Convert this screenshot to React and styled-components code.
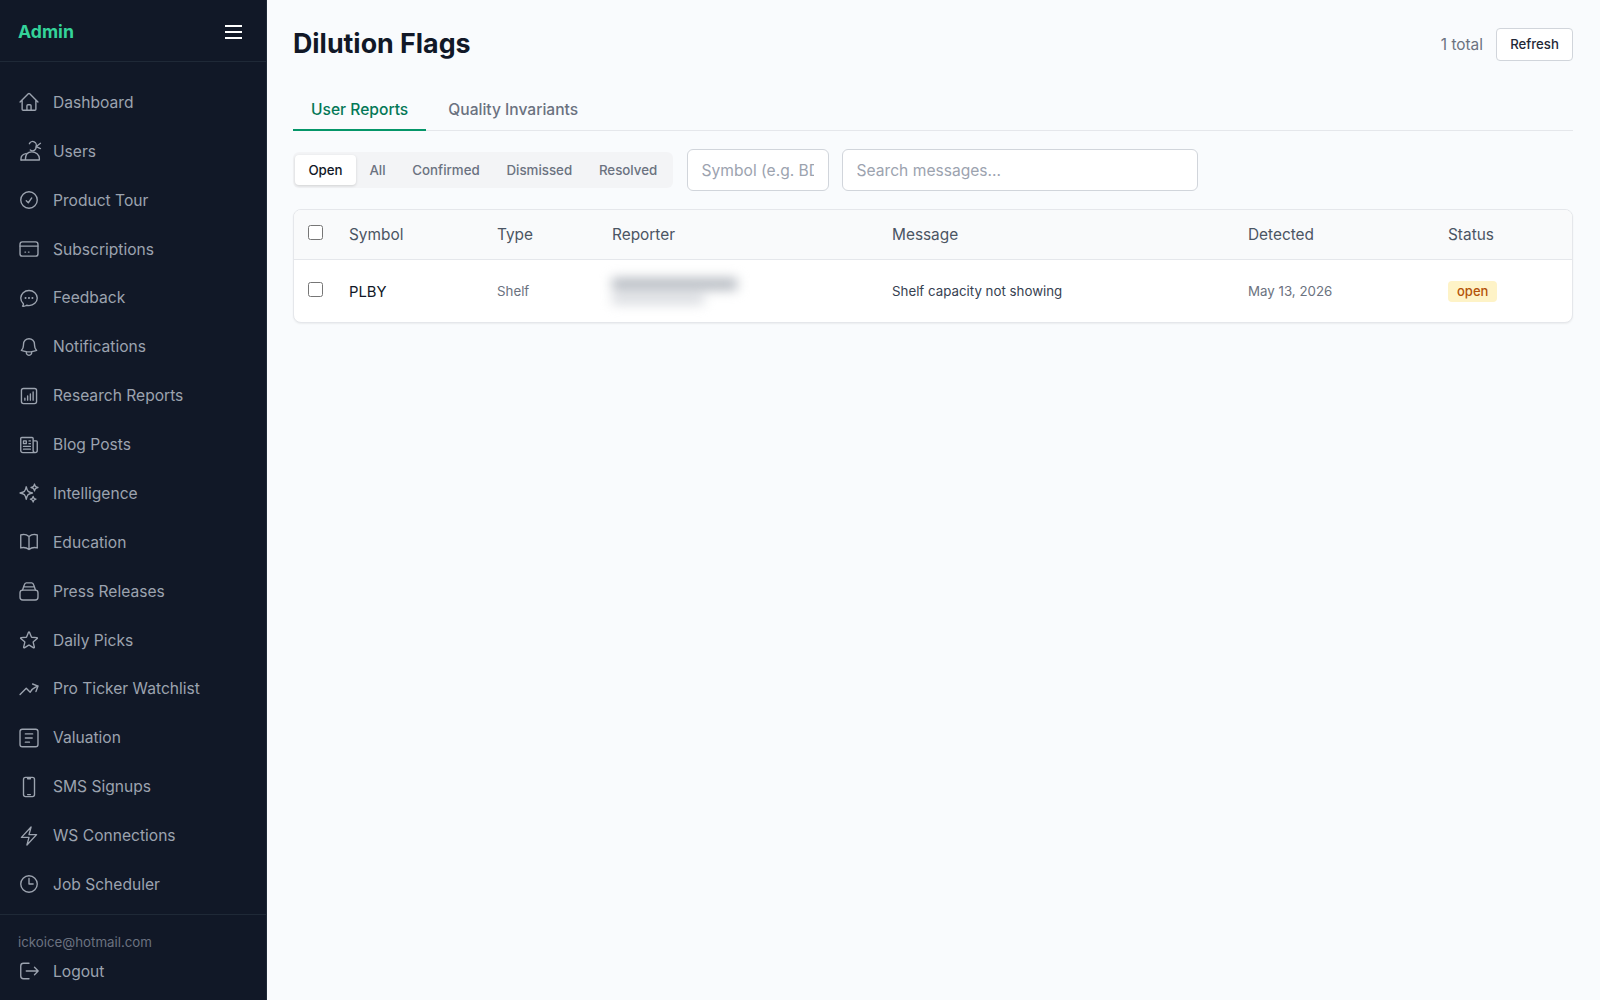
import styled, { createGlobalStyle } from "styled-components";
import {
  HiOutlineHome,
  HiOutlineCheckCircle,
  HiOutlineChatBubbleOvalLeftEllipsis,
  HiOutlineBell,
  HiOutlineChartBarSquare,
  HiOutlineNewspaper,
  HiOutlineSparkles,
  HiOutlineBookOpen,
  HiOutlineStar,
  HiOutlineArrowTrendingUp,
  HiOutlineDevicePhoneMobile,
  HiOutlineBolt,
  HiOutlineClock,
} from "react-icons/hi2";

const GlobalStyle = createGlobalStyle`
  * { box-sizing: border-box; }
  html, body { margin: 0; height: 100%; }
  body {
    font-family: Inter, "Liberation Sans", sans-serif;
    background: #f9fafb;
    color: #111827;
  }
`;

const Layout = styled.div`
  display: flex;
  width: 1600px;
  height: 1000px;
  overflow: hidden;
  background: #f9fbfd;
`;

const Sidebar = styled.aside`
  width: 267px;
  flex-shrink: 0;
  display: flex;
  flex-direction: column;
  background: #111827;
  border-right: 1px solid #1f2937;
`;

const SidebarHead = styled.div`
  height: 62px;
  padding: 2px 24px 0 18px;
  display: flex;
  align-items: center;
  justify-content: space-between;
  border-bottom: 1px solid #1f2937;
`;

const Logo = styled.span`
  font-size: 17.7px;
  font-weight: 700;
  color: #34d399;
`;

const MenuButton = styled.button`
  display: flex;
  padding: 0;
  border: 0;
  background: none;
  color: #ffffff;
`;

const Nav = styled.nav`
  flex: 1;
  padding-top: 16px;
`;

const NavItem = styled.a`
  height: 48.88px;
  padding-left: 18px;
  display: flex;
  align-items: center;
  gap: 13px;
  font-size: 15.6px;
  color: #9ca3af;

  svg {
    width: 22px;
    height: 22px;
    flex-shrink: 0;
    overflow: visible;
  }
`;

const SidebarFoot = styled.div`
  height: 86px;
  padding: 17px 0 0;
  border-top: 1px solid #1f2937;
`;

const Email = styled.div`
  padding-left: 18px;
  font-size: 13.3px;
  line-height: 20px;
  color: #6b7280;
`;

const LogoutItem = styled(NavItem)`
  height: 38px;
`;

const Main = styled.main`
  flex: 1;
  padding: 0 27px 0 26px;
`;

const PageHead = styled.header`
  height: 88px;
  display: flex;
  align-items: center;
  justify-content: space-between;
`;

const Title = styled.h1`
  margin: 0 0 2px;
  font-size: 26.8px;
  font-weight: 700;
  color: #111827;
`;

const HeadRight = styled.div`
  display: flex;
  align-items: center;
  gap: 13px;
`;

const Total = styled.span`
  font-size: 15.4px;
  color: #6b7280;
`;

const RefreshButton = styled.button`
  width: 77px;
  height: 33px;
  padding: 0;
  font: 450 13.2px Inter, sans-serif;
  color: #1f2937;
  background: #ffffff;
  border: 1px solid #d1d5db;
  border-radius: 4px;
`;

const Tabs = styled.div`
  display: flex;
  height: 43px;
  border-bottom: 1px solid #e5e7eb;
`;

const Tab = styled.button`
  height: 43px;
  padding: 1px 18px 0;
  font: 500 15.6px Inter, sans-serif;
  background: none;
  border: 0;
  border-bottom: 2px solid ${(p) => (p.$active ? "#059669" : "transparent")};
  color: ${(p) => (p.$active ? "#047857" : "#6b7280")};
  margin-right: 4px;
`;

const FilterRow = styled.div`
  display: flex;
  align-items: center;
  gap: 13px;
  height: 78px;
`;

const Segments = styled.div`
  display: flex;
  align-items: center;
  height: 36px;
  margin-right: 1px;
  padding: 3px 2px;
  background: #f3f4f6;
  border-radius: 6px;
`;

const Segment = styled.button`
  height: 30px;
  padding: 0 13.4px;
  font: ${(p) => (p.$active ? 500 : 450)} 13.3px Inter, sans-serif;
  border: 0;
  border-radius: 4px;
  background: ${(p) => (p.$active ? "#ffffff" : "transparent")};
  color: ${(p) => (p.$active ? "#111827" : "#6b7280")};
  box-shadow: ${(p) => (p.$active ? "0 1px 3px rgba(0,0,0,.15)" : "none")};
`;

const TextInput = styled.input`
  width: ${(p) => p.$width}px;
  height: 42px;
  padding: 0 14px;
  font: 400 15.6px Inter, sans-serif;
  color: #111827;
  background: #ffffff;
  border: 1px solid #d1d5db;
  border-radius: 6px;

  &::placeholder {
    color: #9ca3af;
  }
`;

const Card = styled.div`
  background: #ffffff;
  border: 1px solid #e5e7eb;
  border-radius: 8px;
  box-shadow: 0 1px 2px rgba(0, 0, 0, 0.06);
  overflow: hidden;
`;

const Table = styled.table`
  width: 100%;
  table-layout: fixed;
  border-collapse: collapse;
`;

const HeadRow = styled.tr`
  height: 49px;
  background: #f9fafb;
  border-bottom: 1px solid #e5e7eb;
`;

const Th = styled.th`
  padding: 0 14px;
  text-align: left;
  font-size: 15.4px;
  font-weight: 400;
  color: #4b5563;
`;

const Td = styled.td`
  height: 63px;
  padding: 0 14px;
  font-size: 13.3px;
  color: ${(p) => p.$color || "#374151"};
`;

const SymbolCell = styled(Td)`
  padding-top: 2px;
  font-size: 14.8px;
  font-weight: 400;
  color: #111827;
`;

const Check = styled.input.attrs({ type: "checkbox" })`
  display: block;
  width: 15px;
  height: 15px;
  margin: 0;
  position: relative;
  top: ${(p) => p.$lift}px;
`;

const BlurLines = styled.div`
  display: flex;
  flex-direction: column;
  gap: 5px;
  filter: blur(6px);
`;

const BlurLine = styled.div`
  width: ${(p) => p.$width}px;
  height: ${(p) => p.$height}px;
  background: ${(p) => p.$color};
`;

const Badge = styled.span`
  display: inline-block;
  margin-top: 2px;
  padding: 2px 9px;
  font-size: 13px;
  font-weight: 500;
  line-height: 17px;
  color: #b45309;
  background: #fef3c7;
  border-radius: 4px;
`;

const strokeProps = {
  viewBox: "0 0 24 24",
  fill: "none",
  stroke: "currentColor",
  strokeWidth: 1.5,
  strokeLinecap: "round",
  strokeLinejoin: "round",
};

const UsersIcon = () => (
  <svg {...strokeProps}>
    <path d="M3.3 21.8h20v-1.5c0-4.3-3.8-7.3-8.3-7.3s-7 3.5-7 8.5" />
    <path d="M3.3 21.8v-1.5c0-3 2.5-5 5.5-5.5" />
    <path d="M12.4 4a3.8 3.8 0 0 1 7.2 3.3 3.8 3.8 0 0 1-6.2 3.6M19.6 7.3 24.5 3.6M20.5 7.5l4 1.8" />
  </svg>
);

const CardIcon = () => (
  <svg {...strokeProps}>
    <rect x="2.2" y="4.2" width="19.6" height="15.6" rx="2.5" />
    <path d="M2.2 8.8h19.6M7.6 15.4h.6M11.4 15.4h.6" />
  </svg>
);

const PressIcon = () => (
  <svg {...strokeProps}>
    <rect x="2.2" y="11" width="19.6" height="10.8" rx="3" />
    <path d="M5 11l1.8-5.5c.3-1 1-2.3 2.2-2.3h6c1.2 0 1.9 1.3 2.2 2.3L19 11M6.2 7.5h11.6" />
  </svg>
);

const ValuationIcon = () => (
  <svg {...strokeProps}>
    <rect x="2.2" y="2.5" width="19.6" height="19" rx="2.5" />
    <path d="M8 7.5h8M8 12h7.5M8 16.5h4.5" />
  </svg>
);

const LogoutIcon = () => (
  <svg {...strokeProps}>
    <path d="M12 3.5H6a3 3 0 0 0-3 3v11a3 3 0 0 0 3 3h6M9 12h13M18 8l4 4-4 4" />
  </svg>
);

const MenuIcon = () => (
  <svg width="17" height="14" viewBox="0 0 17 14" fill="none" stroke="currentColor" strokeWidth="2">
    <path d="M0 1h17M0 7h17M0 13h17" />
  </svg>
);

const navItems = [
  { label: "Dashboard", icon: <HiOutlineHome /> },
  { label: "Users", icon: <UsersIcon /> },
  { label: "Product Tour", icon: <HiOutlineCheckCircle /> },
  { label: "Subscriptions", icon: <CardIcon /> },
  { label: "Feedback", icon: <HiOutlineChatBubbleOvalLeftEllipsis /> },
  { label: "Notifications", icon: <HiOutlineBell /> },
  { label: "Research Reports", icon: <HiOutlineChartBarSquare /> },
  { label: "Blog Posts", icon: <HiOutlineNewspaper /> },
  { label: "Intelligence", icon: <HiOutlineSparkles /> },
  { label: "Education", icon: <HiOutlineBookOpen /> },
  { label: "Press Releases", icon: <PressIcon /> },
  { label: "Daily Picks", icon: <HiOutlineStar /> },
  { label: "Pro Ticker Watchlist", icon: <HiOutlineArrowTrendingUp /> },
  { label: "Valuation", icon: <ValuationIcon /> },
  { label: "SMS Signups", icon: <HiOutlineDevicePhoneMobile /> },
  { label: "WS Connections", icon: <HiOutlineBolt /> },
  { label: "Job Scheduler", icon: <HiOutlineClock /> },
];

const filters = ["Open", "All", "Confirmed", "Dismissed", "Resolved"];

const App = () => {
  return (
    <>
      <GlobalStyle />
      <Layout>
        <Sidebar>
          <SidebarHead>
            <Logo>Admin</Logo>
            <MenuButton>
              <MenuIcon />
            </MenuButton>
          </SidebarHead>
          <Nav>
            {navItems.map((item) => (
              <NavItem key={item.label}>
                {item.icon}
                {item.label}
              </NavItem>
            ))}
          </Nav>
          <SidebarFoot>
            <Email>ickoice@hotmail.com</Email>
            <LogoutItem>
              <LogoutIcon />
              Logout
            </LogoutItem>
          </SidebarFoot>
        </Sidebar>
        <Main>
          <PageHead>
            <Title>Dilution Flags</Title>
            <HeadRight>
              <Total>1 total</Total>
              <RefreshButton>Refresh</RefreshButton>
            </HeadRight>
          </PageHead>
          <Tabs>
            <Tab $active>User Reports</Tab>
            <Tab>Quality Invariants</Tab>
          </Tabs>
          <FilterRow>
            <Segments>
              {filters.map((f) => (
                <Segment key={f} $active={f === "Open"}>
                  {f}
                </Segment>
              ))}
            </Segments>
            <TextInput $width={142} placeholder="Symbol (e.g. BDSX)" />
            <TextInput $width={356} placeholder="Search messages..." />
          </FilterRow>
          <Card>
            <Table>
              <colgroup>
                <col width="41" />
                <col width="148" />
                <col width="115" />
                <col width="280" />
                <col width="356" />
                <col width="200" />
                <col />
              </colgroup>
              <thead>
                <HeadRow>
                  <Th><Check $lift={-2} /></Th>
                  <Th>Symbol</Th>
                  <Th>Type</Th>
                  <Th>Reporter</Th>
                  <Th>Message</Th>
                  <Th>Detected</Th>
                  <Th>Status</Th>
                </HeadRow>
              </thead>
              <tbody>
                <tr>
                  <Td><Check $lift={-1} /></Td>
                  <SymbolCell>PLBY</SymbolCell>
                  <Td $color="#6b7280">Shelf</Td>
                  <Td>
                    <BlurLines>
                      <BlurLine $width={125} $height={12} $color="#b4b9c0" />
                      <BlurLine $width={92} $height={9} $color="#d4d7dc" />
                    </BlurLines>
                  </Td>
                  <Td>Shelf capacity not showing</Td>
                  <Td $color="#6b7280">May 13, 2026</Td>
                  <Td><Badge>open</Badge></Td>
                </tr>
              </tbody>
            </Table>
          </Card>
        </Main>
      </Layout>
    </>
  );
};

export default App;
